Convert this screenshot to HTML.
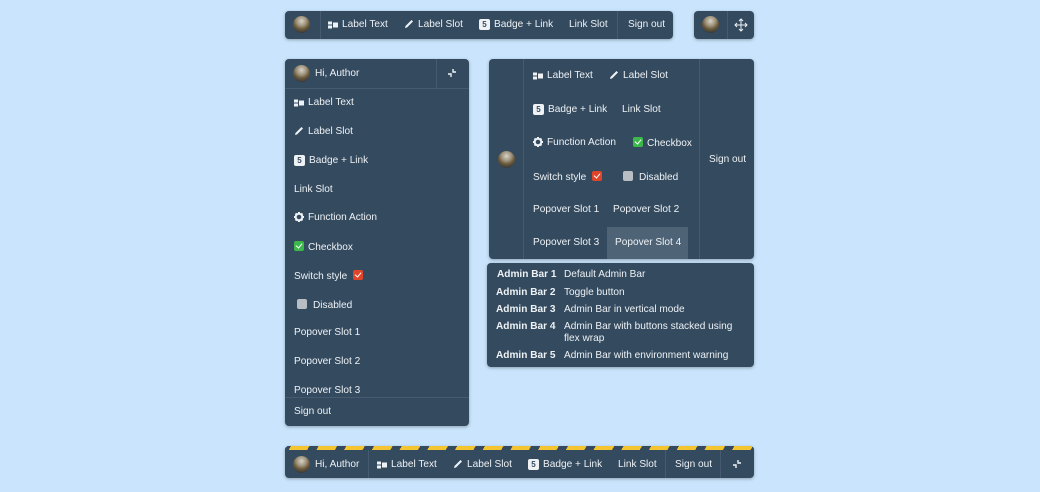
<!DOCTYPE html>
<html><head><style>
*{margin:0;padding:0;box-sizing:border-box}
body{width:1040px;height:492px;background:#c9e4fc;font-family:"Liberation Sans",sans-serif;font-size:10.1px;color:#eef2f5;position:relative;overflow:hidden}
.p{position:absolute;background:#344a5f;border-radius:4px;box-shadow:0 1px 3px rgba(0,0,0,.3)}
.t{position:absolute;white-space:nowrap;line-height:12px}
.vl{position:absolute;width:1px;background:#465b6f}
.hl{position:absolute;height:1px;background:#465b6f}
.av{position:absolute;width:17px;height:17px;border-radius:50%;background:radial-gradient(circle at 50% 30%,#d8d4c8 0,#9b8f78 35%,#6b5a3a 55%,#3a3a3a 80%)}
.ic{display:inline-block;vertical-align:-2px;margin-right:4px}
.b5{display:inline-block;width:11px;height:11px;background:#eef2f5;color:#344a5f;border-radius:2px;font-size:8px;font-weight:bold;text-align:center;line-height:11px;margin-right:4px;vertical-align:0}
.cbg{display:inline-block;width:10px;height:10px;background:#3cb84a;border-radius:2px;margin-right:4px;vertical-align:-1px;position:relative}
.cbr{background:#e0452a}
.cbx{background:#b9bec4;margin-right:6px;margin-left:3px}
.ck:after{content:"";position:absolute;left:3px;top:1px;width:3px;height:5px;border:solid #fff;border-width:0 1.5px 1.5px 0;transform:rotate(40deg)}
b{font-weight:bold}
</style></head><body>
<svg width="0" height="0" style="position:absolute"><defs>
<symbol id="lt" viewBox="0 0 10 8"><rect x="0" y="0.5" width="4" height="3" fill="#eef2f5"/><rect x="0" y="4.5" width="4" height="3" fill="#eef2f5"/><rect x="5" y="1.5" width="5" height="5" fill="#eef2f5"/></symbol>
<symbol id="pen" viewBox="0 0 10 10"><path d="M1 9 L1.5 7 L7.5 1 L9 2.5 L3 8.5 Z" fill="#eef2f5"/></symbol>
<symbol id="gear" viewBox="0 0 10 10"><circle cx="5" cy="5" r="3.3" fill="none" stroke="#eef2f5" stroke-width="2"/><g stroke="#eef2f5" stroke-width="2"><path d="M5 0v2M5 8v2M0 5h2M8 5h2M1.5 1.5l1.4 1.4M7.1 7.1l1.4 1.4M1.5 8.5l1.4-1.4M7.1 2.9l1.4-1.4"/></g></symbol>
<symbol id="shr" viewBox="0 0 10 10"><path d="M6 1v3h3M4 9V6H1" fill="none" stroke="#eef2f5" stroke-width="1.4"/></symbol>
</defs></svg>

<div class="p" style="left:285px;top:11px;width:388px;height:28px"></div>
<div class="av" style="left:293px;top:16px"></div>
<div class="vl" style="left:320px;top:11px;height:28px"></div>
<div class="t" style="left:328px;top:19px"><svg class="ic" width="10" height="8"><use href="#lt"/></svg>Label Text</div>
<div class="t" style="left:404px;top:19px"><svg class="ic" width="10" height="10"><use href="#pen"/></svg>Label Slot</div>
<div class="t" style="left:479px;top:19px"><span class="b5">5</span>Badge + Link</div>
<div class="t" style="left:569px;top:19px">Link Slot</div>
<div class="vl" style="left:617px;top:11px;height:28px"></div>
<div class="t" style="left:628px;top:19px">Sign out</div>

<div class="p" style="left:694px;top:11px;width:60px;height:28px"></div>
<div class="av" style="left:702px;top:16px"></div>
<div class="vl" style="left:727px;top:11px;height:28px"></div>
<svg style="position:absolute;left:734px;top:18px" width="14" height="14" viewBox="0 0 14 14"><g stroke="#eef2f5" stroke-width="1" fill="none"><path d="M7 1v12M1 7h12"/><path d="M5 3l2-2 2 2M5 11l2 2 2-2M3 5L1 7l2 2M11 5l2 2-2 2"/></g></svg>

<div class="p" style="left:285px;top:59px;width:184px;height:367px"></div>
<div class="av" style="left:293px;top:65px"></div>
<div class="t" style="left:315px;top:68px">Hi, Author</div>
<div class="vl" style="left:436px;top:59px;height:29px"></div>
<svg style="position:absolute;left:447px;top:68px" width="10" height="10"><use href="#shr"/></svg>
<div class="hl" style="left:285px;top:88px;width:184px"></div>
<div class="t" style="left:294px;top:97px"><svg class="ic" width="10" height="8"><use href="#lt"/></svg>Label Text</div>
<div class="t" style="left:294px;top:126px"><svg class="ic" width="10" height="10"><use href="#pen"/></svg>Label Slot</div>
<div class="t" style="left:294px;top:155px"><span class="b5">5</span>Badge + Link</div>
<div class="t" style="left:294px;top:184px">Link Slot</div>
<div class="t" style="left:294px;top:212px"><svg class="ic" width="10" height="10"><use href="#gear"/></svg>Function Action</div>
<div class="t" style="left:294px;top:241px"><span class="cbg ck"></span>Checkbox</div>
<div class="t" style="left:294px;top:270px">Switch style <span class="cbg cbr ck" style="margin-left:3px"></span></div>
<div class="t" style="left:294px;top:299px"><span class="cbg cbx"></span>Disabled</div>
<div class="t" style="left:294px;top:327px">Popover Slot 1</div>
<div class="t" style="left:294px;top:356px">Popover Slot 2</div>
<div class="t" style="left:294px;top:385px">Popover Slot 3</div>
<div class="hl" style="left:285px;top:397px;width:184px"></div>
<div class="t" style="left:294px;top:406px">Sign out</div>

<div class="p" style="left:489px;top:59px;width:265px;height:200px"></div>
<div class="av" style="left:498px;top:151px"></div>
<div class="vl" style="left:523px;top:59px;height:200px"></div>
<div class="vl" style="left:699px;top:59px;height:200px"></div>
<div style="position:absolute;left:607px;top:227px;width:81px;height:32px;background:#4f6376"></div>
<div class="t" style="left:533px;top:70px"><svg class="ic" width="10" height="8"><use href="#lt"/></svg>Label Text</div>
<div class="t" style="left:609px;top:70px"><svg class="ic" width="10" height="10"><use href="#pen"/></svg>Label Slot</div>
<div class="t" style="left:533px;top:104px"><span class="b5">5</span>Badge + Link</div>
<div class="t" style="left:622px;top:104px">Link Slot</div>
<div class="t" style="left:533px;top:137px"><svg class="ic" width="10" height="10"><use href="#gear"/></svg>Function Action</div>
<div class="t" style="left:633px;top:137px"><span class="cbg ck"></span>Checkbox</div>
<div class="t" style="left:533px;top:171px">Switch style <span class="cbg cbr ck" style="margin-left:3px"></span></div>
<div class="t" style="left:620px;top:171px"><span class="cbg cbx"></span>Disabled</div>
<div class="t" style="left:533px;top:204px">Popover Slot 1</div>
<div class="t" style="left:613px;top:204px">Popover Slot 2</div>
<div class="t" style="left:533px;top:237px">Popover Slot 3</div>
<div class="t" style="left:615px;top:237px">Popover Slot 4</div>
<div class="t" style="left:709px;top:154px">Sign out</div>

<div class="p" style="left:487px;top:263px;width:267px;height:104px"></div>
<div class="t" style="left:497px;top:269px"><b>Admin Bar 1</b></div><div class="t" style="left:564px;top:269px">Default Admin Bar</div>
<div class="t" style="left:496px;top:287px"><b>Admin Bar 2</b></div><div class="t" style="left:564px;top:287px">Toggle button</div>
<div class="t" style="left:496px;top:304px"><b>Admin Bar 3</b></div><div class="t" style="left:564px;top:304px">Admin Bar in vertical mode</div>
<div class="t" style="left:496px;top:321px"><b>Admin Bar 4</b></div><div class="t" style="left:564px;top:321px">Admin Bar with buttons stacked using</div>
<div class="t" style="left:564px;top:333px">flex wrap</div>
<div class="t" style="left:496px;top:350px"><b>Admin Bar 5</b></div><div class="t" style="left:564px;top:350px">Admin Bar with environment warning</div>

<div class="p" style="left:285px;top:446px;width:469px;height:32px;overflow:hidden"><div style="height:4px;background:repeating-linear-gradient(-60deg,#344a5f 0 3px,#f4c531 3px 19px,#344a5f 19px 24px)"></div></div>
<div class="av" style="left:293px;top:456px"></div>
<div class="t" style="left:315px;top:459px">Hi, Author</div>
<div class="vl" style="left:368px;top:450px;height:28px"></div>
<div class="t" style="left:377px;top:459px"><svg class="ic" width="10" height="8"><use href="#lt"/></svg>Label Text</div>
<div class="t" style="left:453px;top:459px"><svg class="ic" width="10" height="10"><use href="#pen"/></svg>Label Slot</div>
<div class="t" style="left:528px;top:459px"><span class="b5">5</span>Badge + Link</div>
<div class="t" style="left:618px;top:459px">Link Slot</div>
<div class="vl" style="left:665px;top:450px;height:28px"></div>
<div class="t" style="left:675px;top:459px">Sign out</div>
<div class="vl" style="left:720px;top:450px;height:28px"></div>
<svg style="position:absolute;left:732px;top:459px" width="10" height="10"><use href="#shr"/></svg>
</body></html>
